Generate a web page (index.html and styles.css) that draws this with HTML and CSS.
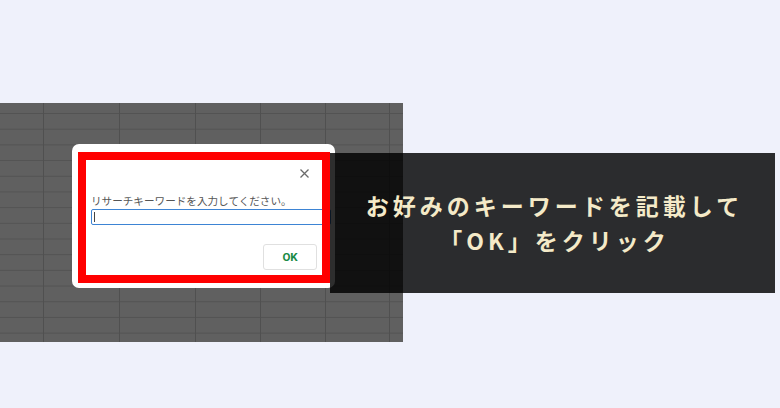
FILE: index.html
```html
<!DOCTYPE html>
<html lang="ja">
<head>
<meta charset="utf-8">
<link rel="stylesheet" href="styles.css">
</head>
<body>
<div class="stage">
  <div class="sheet">
    <div class="dialog">
      <div class="close-row">
        <svg class="close" width="9" height="9" viewBox="0 0 9 9"><path d="M0.5 0.5 L8.5 8.5 M8.5 0.5 L0.5 8.5" stroke="#6a6a6a" stroke-width="1.3" fill="none"/></svg>
      </div>
      <div class="label">リサーチキーワードを入力してください。</div>
      <div class="input"><span class="caret"></span></div>
      <div class="actions"><div class="ok">OK</div></div>
      <div class="frame"></div>
    </div>
  </div>
  <div class="caption">
    <div class="line">お好みのキーワードを記載して</div>
    <div class="line">「OK」をクリック</div>
  </div>
</div>
</body>
</html>
```

FILE: styles.css
```css
html, body {
  margin: 0;
  padding: 0;
}
body {
  width: 780px;
  height: 408px;
  overflow: hidden;
  background: #eff1fb;
  font-family: "Noto Sans CJK JP", "Noto Sans", sans-serif;
}
.stage {
  position: relative;
  padding-top: 103px;
}
.sheet {
  position: relative;
  width: 403px;
  height: 239px;
  background-color: #606060;
  background-image:
    linear-gradient(#505050, #505050),
    linear-gradient(#505050, #505050),
    linear-gradient(#505050, #505050),
    linear-gradient(#505050, #505050),
    linear-gradient(#505050, #505050),
    linear-gradient(#505050, #505050),
    linear-gradient(to bottom, #535353 1px, transparent 1px);
  background-repeat: no-repeat, no-repeat, no-repeat, no-repeat, no-repeat, no-repeat, repeat;
  background-size: 1px 100%, 1px 100%, 1px 100%, 1px 100%, 1px 100%, 1px 100%, 100% 15.7px;
  background-position: 43px 0, 119px 0, 195px 0, 260px 0, 325px 0, 389px 0, 0 10px;
}
.dialog {
  position: absolute;
  left: 72px;
  top: 41px;
  width: 263px;
  height: 144px;
  box-sizing: border-box;
  background: #fff;
  border-radius: 7px;
  padding: 25px 0 0 19px;
  display: flex;
  flex-direction: column;
}
.close-row {
  display: flex;
  justify-content: flex-end;
  padding-right: 26px;
  height: 9px;
}
.close {
  display: block;
}
.label {
  margin-top: 16px;
  font-size: 10.6px;
  line-height: 14px;
  color: #555;
  white-space: nowrap;
}
.input {
  margin-top: 1px;
  width: 240px;
  height: 16px;
  box-sizing: border-box;
  border: 1.5px solid #3d84d4;
  border-radius: 2px;
  display: flex;
  align-items: center;
  padding-left: 2px;
}
.caret {
  width: 1px;
  height: 10px;
  background: #444;
}
.actions {
  display: flex;
  justify-content: flex-end;
  padding-right: 18px;
  margin-top: 19px;
}
.ok {
  width: 54px;
  height: 26px;
  box-sizing: border-box;
  border: 1px solid #e0e0e0;
  border-radius: 3px;
  display: flex;
  align-items: center;
  justify-content: center;
  font-family: "Roboto", "Liberation Sans", sans-serif;
  font-weight: 700;
  font-size: 11.5px;
  color: #1a8a45;
}
.frame {
  position: absolute;
  left: 6px;
  top: 8px;
  width: 252px;
  height: 131px;
  box-sizing: border-box;
  border: 8px solid #ff0000;
  pointer-events: none;
}
.caption {
  position: absolute;
  left: 330px;
  top: 153px;
  width: 445px;
  height: 140px;
  background: rgba(0, 0, 0, 0.82);
  display: flex;
  flex-direction: column;
  align-items: center;
  justify-content: center;
  color: #f4eac8;
  font-family: "Noto Sans CJK JP", sans-serif;
  font-weight: 700;
  font-size: 23px;
  line-height: 35px;
  letter-spacing: 4px;
}
.line {
  white-space: nowrap;
  padding-left: 4px;
}
```
